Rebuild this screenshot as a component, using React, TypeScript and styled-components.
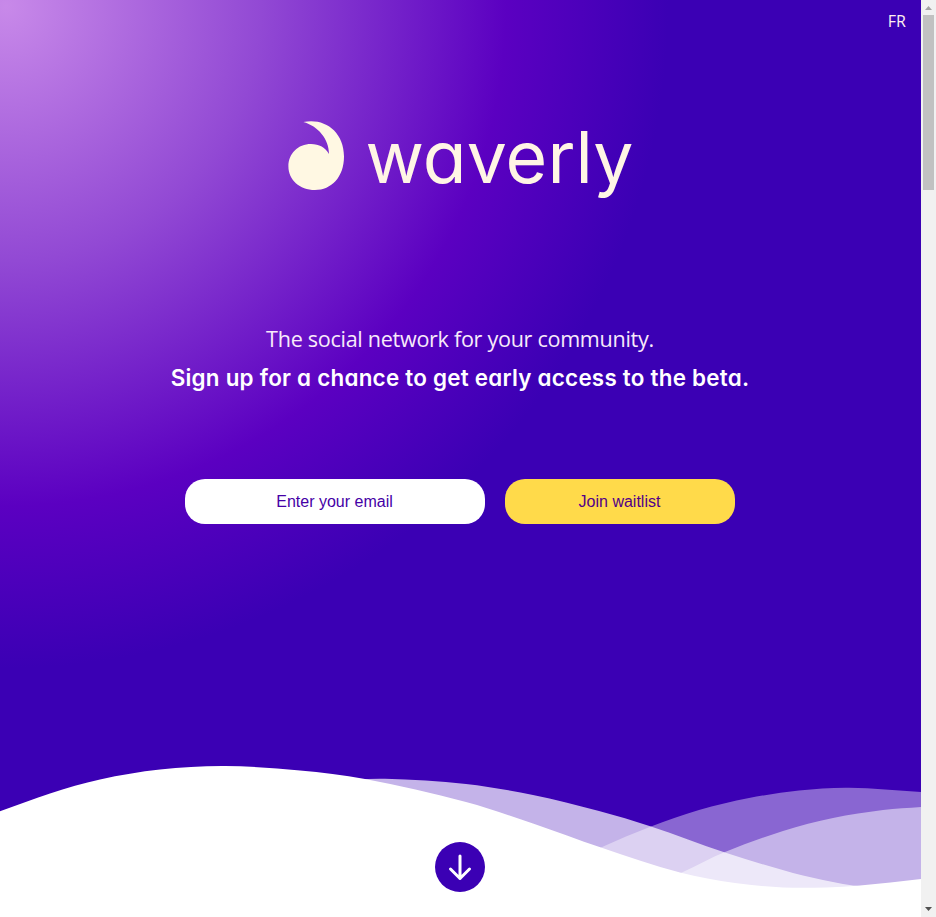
import React from "react";
import styled, { createGlobalStyle } from "styled-components";

const GlobalStyle = createGlobalStyle`
  * { box-sizing: border-box; }
  html, body { margin: 0; padding: 0; overflow: hidden; }
`;

const Viewport = styled.div`
  display: grid;
  grid-template-columns: 1fr 15px;
  height: 917px;
  font-family: "Open Sans", "Noto Sans", sans-serif;
`;

const Hero = styled.main`
  display: flex;
  flex-direction: column;
  align-items: center;
  min-width: 0;
  color: #fff;
  background: radial-gradient(circle at 6px 6px, #c889e9 0, #9249d4 255px, #5b00c1 500px, #3b00b4 662px);
`;

const TopBar = styled.header`
  display: flex;
  justify-content: flex-end;
  width: 100%;
  height: 42px;
  padding: 10px 15px 0;
`;

const LanguageLink = styled.a`
  color: #fff0f0;
  font-size: 16px;
  line-height: 22px;
`;

const Logo = styled.svg`
  display: block;
  width: 350px;
  height: 94px;
  margin: 74px 1px 0 0;
  overflow: visible;
`;

const Wordmark = styled.text`
  fill: #fff5e5;
  font-family: Inter, sans-serif;
  font-size: 71.5px;
  font-weight: 400;
  font-feature-settings: "cv11" 1;
`;

const Pitch = styled.section`
  display: flex;
  flex-direction: column;
  align-items: center;
  margin: 111px 1px 0 0;
  height: 80px;
  white-space: nowrap;
`;

const Tagline = styled.p`
  margin: 0 0 2px;
  font-size: 21.6px;
  font-weight: 400;
  letter-spacing: -0.3px;
  line-height: 36px;
  color: #f8eafa;
`;

const CallToAction = styled.h1`
  margin: 0;
  font-family: Inter, sans-serif;
  font-feature-settings: "cv11" 1;
  font-size: 22.4px;
  font-weight: 600;
  letter-spacing: 0.25px;
  line-height: 38px;
`;

const SignupForm = styled.form`
  display: flex;
  gap: 20px;
  margin: 78px 1px 0 0;
`;

const EmailInput = styled.input`
  width: 300px;
  height: 45px;
  padding: 0 11px 0 10px;
  border: 0;
  border-radius: 20px;
  background: #fff;
  font: 16px "Liberation Sans", Arial, sans-serif;
  text-align: center;
  &::placeholder { color: #4500a6; opacity: 1; }
`;

const JoinButton = styled.button`
  width: 230px;
  height: 45px;
  padding: 0 1px 0 0;
  border: 0;
  border-radius: 20px;
  background: #ffda4a;
  color: #520088;
  font: 16px "Liberation Sans", Arial, sans-serif;
`;

const WaveFooter = styled.footer`
  display: grid;
  width: 100%;
  height: 157px;
  margin-top: auto;
  & > * { grid-area: 1 / 1; }
`;

const Waves = styled.svg`
  display: block;
  width: 100%;
  height: 157px;
`;

const ScrollDown = styled.button`
  z-index: 1;
  align-self: end;
  justify-self: center;
  width: 50px;
  height: 50px;
  margin-bottom: 25px;
  margin-right: 1px;
  padding: 0;
  border: 0;
  border-radius: 50%;
  background: #3b00b4;
  svg { display: block; }
`;

const ScrollTrack = styled.aside`
  display: grid;
  grid-template-rows: 15px 1fr 15px;
  justify-items: center;
  background: #f1f1f1;
`;

const ScrollThumb = styled.div`
  width: 11px;
  height: 175px;
  background: #c1c1c1;
`;

const StepArrow = styled.svg<{ $active?: boolean }>`
  display: block;
  fill: ${(p) => (p.$active ? "#505050" : "#a3a3a3")};
`;

type Point = [number, number];

/** Smooth curve through the crest points, closed along the bottom edge. */
function wavePath(points: Point[]): string {
  const slope = points.map((_, i) => {
    const a = points[Math.max(0, i - 1)];
    const b = points[Math.min(points.length - 1, i + 1)];
    return (b[1] - a[1]) / (b[0] - a[0]);
  });
  let d = `M${points[0][0]} ${points[0][1]}`;
  for (let i = 1; i < points.length; i++) {
    const [x0, y0] = points[i - 1];
    const [x1, y1] = points[i];
    const h = (x1 - x0) / 3;
    d += `C${x0 + h} ${y0 + slope[i - 1] * h} ${x1 - h} ${y1 - slope[i] * h} ${x1} ${y1}`;
  }
  return `${d}V917H${points[0][0]}Z`;
}

const waves: { opacity: number; points: Point[] }[] = [
  { opacity: 0.4, points: [[560, 867], [601, 847.5], [651, 826.5], [699, 810], [749, 798], [799, 790.6], [849, 787.7], [921, 792]] },
  { opacity: 0.5, points: [[640, 892], [683, 872], [725, 852], [783, 831], [833, 818], [883, 810], [921, 807]] },
  { opacity: 0.7, points: [[330, 781], [385, 778.7], [466, 784], [533, 795], [599, 811], [651, 826.5], [725, 852.5], [793, 873], [833, 882], [853, 885.5], [921, 892]] },
  { opacity: 1, points: [[0, 811.3], [50, 793.5], [100, 779.5], [160, 769.6], [225, 766], [300, 770.5], [365, 779], [466, 802], [533, 823.5], [601, 847.5], [680, 872.5], [735, 883], [783, 887.4], [826, 887.5], [860, 885.5], [921, 879]] },
];

export default function App() {
  return (
    <>
      <GlobalStyle />
      <Viewport>
        <Hero>
          <TopBar>
            <LanguageLink>FR</LanguageLink>
          </TopBar>
          <Logo viewBox="285 116 350 94" role="img" aria-label="waverly">
            <path
              fill="#fff8e3"
              d="M303.3 122C324 117.5 344 131 344 156.5C344 177 331.5 190 315 190C299.5 190 288.4 179.5 288.4 166.5C288.4 153.5 298 144 311 144C319 144 325.5 147.5 329 154C329 139 318 126 303.3 122Z"
            />
            <Wordmark x="365.5" y="183" textLength="268" lengthAdjust="spacing">
              waverly
            </Wordmark>
          </Logo>
          <Pitch>
            <Tagline>The social network for your community.</Tagline>
            <CallToAction>Sign up for a chance to get early access to the beta.</CallToAction>
          </Pitch>
          <SignupForm>
            <EmailInput type="email" placeholder="Enter your email" />
            <JoinButton type="button">Join waitlist</JoinButton>
          </SignupForm>
          <WaveFooter>
            <Waves viewBox="0 760 921 157" preserveAspectRatio="none">
              {waves.map((wave) => (
                <path key={wave.opacity} d={wavePath(wave.points)} fill="#fff" fillOpacity={wave.opacity} />
              ))}
            </Waves>
            <ScrollDown type="button" aria-label="Scroll down">
              <svg width="50" height="50" fill="none" stroke="#fff" strokeWidth="3" strokeLinecap="round" strokeLinejoin="round">
                <path d="M25 14V36.5M15.5 27L25 36.5L34.5 27" />
              </svg>
            </ScrollDown>
          </WaveFooter>
        </Hero>
        <ScrollTrack>
          <StepArrow width="15" height="15">
            <path d="M4 10L7.5 6L11 10Z" />
          </StepArrow>
          <ScrollThumb />
          <StepArrow $active width="15" height="15">
            <path d="M4 5L7.5 9L11 5Z" />
          </StepArrow>
        </ScrollTrack>
      </Viewport>
    </>
  );
}
